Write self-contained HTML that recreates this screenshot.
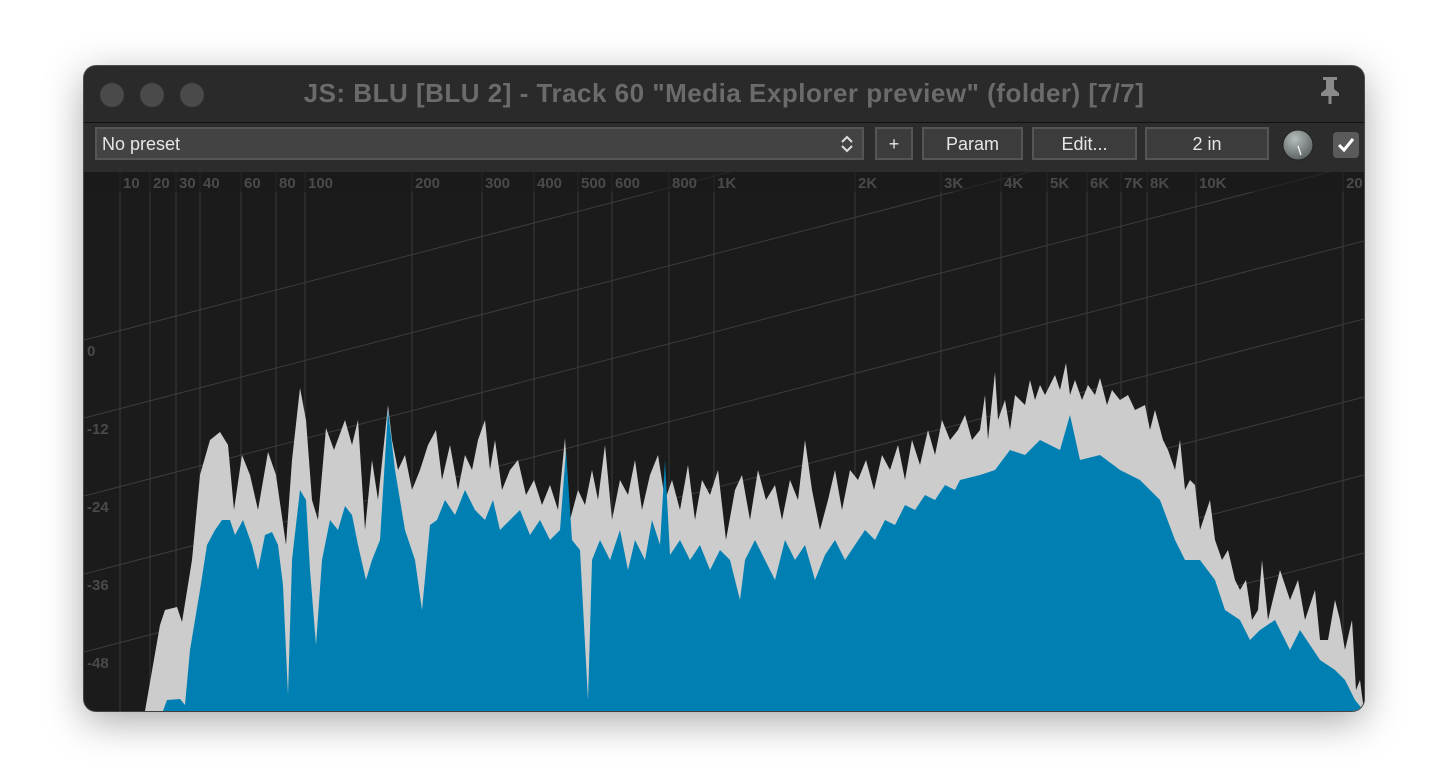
<!DOCTYPE html>
<html><head><meta charset="utf-8"><style>
html,body{margin:0;padding:0;background:#fff;width:1450px;height:776px;overflow:hidden;font-family:"Liberation Sans",sans-serif}
.win{position:absolute;left:84px;top:66px;width:1280px;height:645px;background:#1b1b1b;border-radius:12px;overflow:hidden;box-shadow:0 10px 40px rgba(0,0,0,.35),0 0 0 1px #555}
.title{position:absolute;left:0;top:0;width:1280px;height:56px;background:#2a2a2a;border-bottom:1px solid #111;z-index:2}
.dot{position:absolute;top:17px;width:24px;height:24px;border-radius:50%;background:#4a4a4a}
.ttl{position:absolute;left:0;width:1280px;top:12px;text-align:center;font-weight:bold;font-size:26px;letter-spacing:.5px;color:#6b6b6b;white-space:nowrap}
.tb{position:absolute;left:0;top:57px;width:1280px;height:49px;background:#2c2c2c;z-index:2}
.b{position:absolute;top:4px;height:33px;background:#3c3c3c;border:2px solid #555;box-sizing:border-box;color:#e6e6e6;font-size:18px;line-height:30px;text-align:center}
</style></head><body>
<div class="win">
<div class="title">
<div class="dot" style="left:16px"></div><div class="dot" style="left:56px"></div><div class="dot" style="left:96px"></div>
<div class="ttl">JS: BLU [BLU 2] - Track 60 "Media Explorer preview" (folder) [7/7]</div>
<svg style="position:absolute;left:1232px;top:9px" width="28" height="30" viewBox="0 0 28 30"><path d="M7 2h14v3h-3v9l5 4v3H5v-3l5-4V5H7z M12.5 21h3v8h-3z" fill="#8a8a8a"/></svg>
</div>
<div class="tb">
<div class="b" style="left:11px;width:769px;text-align:left;padding-left:5px;background:#434343">No preset
<svg style="position:absolute;right:8px;top:5px" width="14" height="20" viewBox="0 0 14 20"><path d="M2 8l5-5 5 5M2 12l5 5 5-5" stroke="#ddd" stroke-width="2" fill="none"/></svg></div>
<div class="b" style="left:791px;width:38px">+</div>
<div class="b" style="left:838px;width:101px">Param</div>
<div class="b" style="left:948px;width:105px">Edit...</div>
<div class="b" style="left:1061px;width:124px">2 in</div>
<svg style="position:absolute;left:1197px;top:5px" width="34" height="34" viewBox="0 0 34 34"><defs><radialGradient id="g" cx="40%" cy="30%" r="70%"><stop offset="0" stop-color="#b5bcbc"/><stop offset="1" stop-color="#5e6464"/></radialGradient></defs><circle cx="17" cy="17" r="15" fill="url(#g)" stroke="#222" stroke-width="1"/><line x1="17" y1="18" x2="20" y2="27" stroke="#fff" stroke-width="1.2"/></svg>
<div style="position:absolute;left:1249px;top:9px;width:26px;height:26px;background:#5a5a5a;border-radius:4px"><svg width="26" height="26" viewBox="0 0 26 26"><path d="M6 13l5 5 9-11" stroke="#fff" stroke-width="3" fill="none"/></svg></div>
</div>
<svg style="position:absolute;left:0;top:106px" width="1280" height="539" viewBox="84 172 1280 539">
<g stroke="#3a3a3a" stroke-width="1">
<line x1="120" y1="172" x2="120" y2="711"/><line x1="150" y1="172" x2="150" y2="711"/><line x1="176" y1="172" x2="176" y2="711"/><line x1="200" y1="172" x2="200" y2="711"/><line x1="241" y1="172" x2="241" y2="711"/><line x1="276" y1="172" x2="276" y2="711"/><line x1="305" y1="172" x2="305" y2="711"/><line x1="412" y1="172" x2="412" y2="711"/><line x1="482" y1="172" x2="482" y2="711"/><line x1="534" y1="172" x2="534" y2="711"/><line x1="578" y1="172" x2="578" y2="711"/><line x1="612" y1="172" x2="612" y2="711"/><line x1="669" y1="172" x2="669" y2="711"/><line x1="714" y1="172" x2="714" y2="711"/><line x1="855" y1="172" x2="855" y2="711"/><line x1="941" y1="172" x2="941" y2="711"/><line x1="1001" y1="172" x2="1001" y2="711"/><line x1="1047" y1="172" x2="1047" y2="711"/><line x1="1087" y1="172" x2="1087" y2="711"/><line x1="1121" y1="172" x2="1121" y2="711"/><line x1="1147" y1="172" x2="1147" y2="711"/><line x1="1196" y1="172" x2="1196" y2="711"/><line x1="1343" y1="172" x2="1343" y2="711"/>
</g>
<g stroke="#3c3c3c" stroke-width="1">
<line x1="84" y1="340" x2="1364" y2="7"/><line x1="84" y1="418" x2="1364" y2="85"/><line x1="84" y1="496" x2="1364" y2="163"/><line x1="84" y1="574" x2="1364" y2="241"/><line x1="84" y1="652" x2="1364" y2="319"/><line x1="84" y1="730" x2="1364" y2="397"/><line x1="84" y1="808" x2="1364" y2="475"/><line x1="84" y1="886" x2="1364" y2="553"/>
</g>
<rect x="84" y="172" width="1280" height="20" fill="#1b1b1b" opacity=".6"/>
<g fill="#4a4a4a" font-family="Liberation Sans" font-weight="bold" font-size="15">
<text x="123" y="188">10</text><text x="153" y="188">20</text><text x="179" y="188">30</text><text x="203" y="188">40</text><text x="244" y="188">60</text><text x="279" y="188">80</text><text x="308" y="188">100</text><text x="415" y="188">200</text><text x="485" y="188">300</text><text x="537" y="188">400</text><text x="581" y="188">500</text><text x="615" y="188">600</text><text x="672" y="188">800</text><text x="717" y="188">1K</text><text x="858" y="188">2K</text><text x="944" y="188">3K</text><text x="1004" y="188">4K</text><text x="1050" y="188">5K</text><text x="1090" y="188">6K</text><text x="1124" y="188">7K</text><text x="1150" y="188">8K</text><text x="1199" y="188">10K</text><text x="1346" y="188">20</text>
<text x="87" y="356">0</text><text x="87" y="434">-12</text><text x="87" y="512">-24</text><text x="87" y="590">-36</text><text x="87" y="668">-48</text>
</g>
<polygon fill="#cccccc" points="145,711 160,625 165,610 177,607 182,622 192,560 200,475 210,440 220,432 228,445 234,510 242,455 250,475 258,510 268,452 276,475 286,545 292,460 300,388 306,420 312,500 318,520 326,428 334,450 345,420 352,445 358,420 365,530 372,460 378,500 388,405 392,440 398,470 405,455 412,490 420,470 428,445 436,430 442,480 450,445 458,490 465,455 472,470 478,440 485,420 490,470 495,440 502,490 510,470 518,460 526,495 534,480 542,505 550,485 558,510 565,438 570,520 578,490 585,505 592,470 598,500 605,445 612,520 620,480 628,495 635,460 642,510 650,475 658,455 665,500 672,480 680,510 688,465 695,520 702,480 710,495 718,470 726,540 735,490 742,475 750,520 758,470 766,500 775,485 782,520 790,480 798,500 805,440 812,490 820,530 828,500 835,470 842,510 850,470 858,480 866,460 874,490 882,455 890,470 898,445 905,480 912,440 920,465 928,430 935,455 942,420 950,440 958,430 965,415 972,440 980,430 985,395 988,440 995,372 998,420 1005,400 1010,430 1015,395 1025,405 1030,380 1035,400 1040,385 1045,395 1055,375 1060,390 1066,363 1070,395 1075,380 1082,400 1088,385 1095,395 1100,378 1107,405 1112,390 1120,400 1128,395 1135,410 1145,405 1150,430 1155,410 1163,440 1168,450 1175,470 1180,440 1185,490 1190,480 1195,485 1200,530 1210,500 1215,540 1222,560 1228,550 1235,580 1240,590 1246,580 1252,620 1258,610 1262,560 1268,620 1280,570 1290,600 1298,580 1305,620 1315,590 1320,640 1328,640 1335,600 1340,620 1345,650 1352,620 1356,690 1360,680 1364,711"/>
<polygon fill="#0080b2" points="163,711 167,700 180,699 185,705 190,650 200,590 207,545 215,530 222,520 230,520 235,535 243,520 252,545 258,570 265,535 272,532 278,545 283,585 288,695 292,560 300,490 306,500 310,570 316,645 322,560 330,520 338,530 345,506 352,515 358,545 366,580 372,560 380,540 388,410 395,470 405,530 415,560 422,610 430,525 437,520 445,500 455,515 465,490 475,510 485,520 493,500 500,530 510,520 520,510 530,535 540,520 550,540 560,530 566,450 572,540 580,550 588,700 592,560 600,540 610,560 620,530 628,570 635,540 645,560 652,520 660,545 665,460 670,555 680,540 690,560 700,545 710,570 720,550 730,560 740,600 745,560 755,540 765,560 775,580 785,540 795,560 805,545 815,580 825,555 835,540 845,560 855,545 865,530 875,540 885,520 895,525 905,505 915,510 925,495 935,500 945,485 955,490 960,480 980,475 995,470 1010,450 1025,455 1040,440 1060,450 1070,415 1080,460 1100,455 1120,470 1140,480 1160,500 1175,540 1185,560 1200,560 1215,580 1225,610 1240,620 1250,640 1260,630 1275,620 1290,650 1300,630 1320,660 1335,670 1345,680 1355,700 1364,711"/>
</svg>
</div>
</body></html>
